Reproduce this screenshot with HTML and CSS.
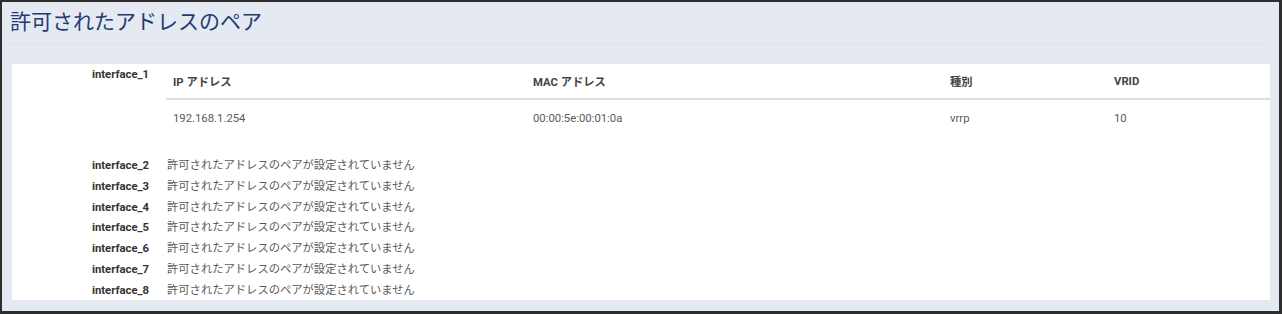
FILE: index.html
```html
<!DOCTYPE html>
<html lang="ja">
<head>
  <meta charset="UTF-8">
  <title>許可されたアドレスのペア</title>
  <link rel="stylesheet" href="styles.css">
</head>
<body>
  <div class="frame">
    <div class="page-head">
      <h1>許可されたアドレスのペア</h1>
    </div>
    <div class="panel">
      <div class="iface-row">
        <div class="iface-name">interface_1</div>
        <table class="pairs">
          <thead>
            <tr>
              <th class="col-ip">IP アドレス</th>
              <th class="col-mac">MAC アドレス</th>
              <th class="col-type">種別</th>
              <th>VRID</th>
            </tr>
          </thead>
          <tbody>
            <tr>
              <td>192.168.1.254</td>
              <td>00:00:5e:00:01:0a</td>
              <td>vrrp</td>
              <td>10</td>
            </tr>
          </tbody>
        </table>
      </div>
      <div class="iface-row empty">
        <div class="iface-name">interface_2</div>
        <div class="none">許可されたアドレスのペアが設定されていません</div>
      </div>
      <div class="iface-row empty">
        <div class="iface-name">interface_3</div>
        <div class="none">許可されたアドレスのペアが設定されていません</div>
      </div>
      <div class="iface-row empty">
        <div class="iface-name">interface_4</div>
        <div class="none">許可されたアドレスのペアが設定されていません</div>
      </div>
      <div class="iface-row empty">
        <div class="iface-name">interface_5</div>
        <div class="none">許可されたアドレスのペアが設定されていません</div>
      </div>
      <div class="iface-row empty">
        <div class="iface-name">interface_6</div>
        <div class="none">許可されたアドレスのペアが設定されていません</div>
      </div>
      <div class="iface-row empty">
        <div class="iface-name">interface_7</div>
        <div class="none">許可されたアドレスのペアが設定されていません</div>
      </div>
      <div class="iface-row empty">
        <div class="iface-name">interface_8</div>
        <div class="none">許可されたアドレスのペアが設定されていません</div>
      </div>
    </div>
  </div>
</body>
</html>
```

FILE: styles.css
```css
html, body {
  margin: 0;
  padding: 0;
}
body {
  font-family: Roboto, "Noto Sans CJK JP", sans-serif;
  background: #ffffff;
}
.frame {
  box-sizing: border-box;
  width: 1282px;
  height: 314px;
  background: #e5e9f2;
  border-style: solid;
  border-color: #2e2e2e;
  border-width: 2px 3px 3px 2px;
  padding: 0 9px 0 10px;
}
.page-head {
  padding-top: 5px;
  margin-left: -10px;
  border-bottom: 1px solid #dde2eb;
  margin-bottom: 20px;
}
.page-head h1 {
  margin: 0;
  padding: 0 0 6px 8px;
  font-size: 21px;
  line-height: 30px;
  font-weight: normal;
  color: #1f3c72;
}
.panel {
  background: #ffffff;
  height: 236px;
}
.iface-row {
  display: grid;
  grid-template-columns: 154px 1fr;
  font-size: 11.3px;
}
.iface-name {
  text-align: right;
  padding-right: 17px;
  font-weight: bold;
  color: #333333;
}
.iface-row:first-child .iface-name {
  padding-top: 4px;
  line-height: 14px;
}
.pairs {
  width: 100%;
  border-collapse: collapse;
  margin-bottom: 20px;
}
.pairs th {
  text-align: left;
  font-weight: bold;
  color: #444444;
  height: 34px;
  padding: 0 7px;
  border-bottom: 2px solid #dddddd;
}
.pairs td {
  color: #5a5a5a;
  height: 36px;
  padding: 0 7px;
}
.col-ip {
  width: 346px;
}
.col-mac {
  width: 403px;
}
.col-type {
  width: 150px;
}
.empty {
  line-height: 20.8px;
}
.none {
  color: #5a5a5a;
  padding-left: 1px;
}
```
